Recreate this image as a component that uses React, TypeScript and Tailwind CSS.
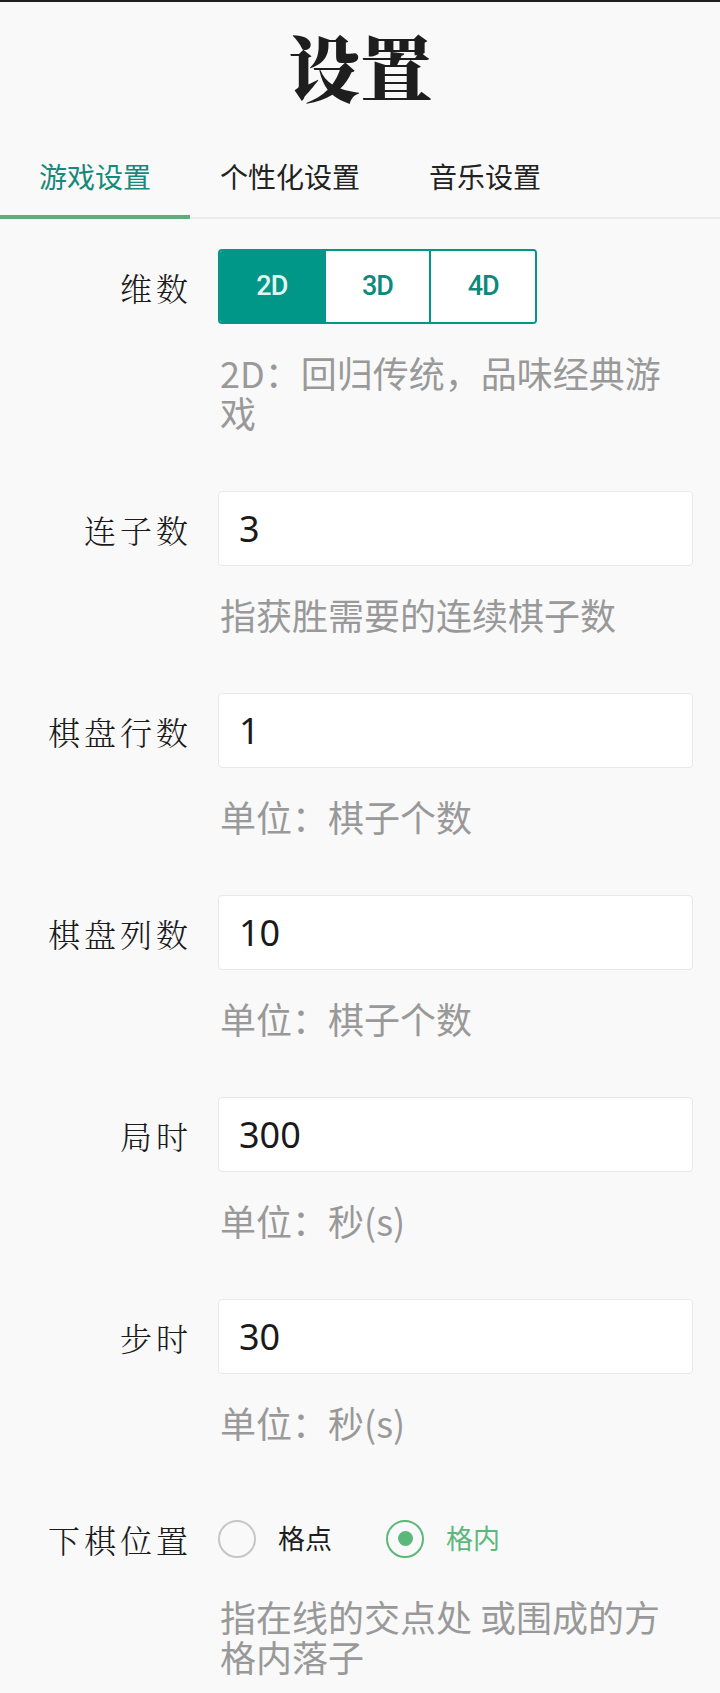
import { useState } from "react";

const CJK = '"Noto Sans CJK SC", "Noto Sans", sans-serif';
const LABEL_FONT = '"Noto Serif CJK SC", "Noto Serif SC", serif';

const TABS = [
  { name: "游戏设置", width: "w-[190px]" },
  { name: "个性化设置", width: "w-[200px]" },
  { name: "音乐设置", width: "w-[190px]" },
];

const FIELDS = [
  { label: "连子数", value: "3", desc: "指获胜需要的连续棋子数" },
  { label: "棋盘行数", value: "1", desc: "单位：棋子个数" },
  { label: "棋盘列数", value: "10", desc: "单位：棋子个数" },
  { label: "局时", value: "300", desc: "单位：秒(s)" },
  { label: "步时", value: "30", desc: "单位：秒(s)" },
];

function Label({ text }: { text: string }) {
  return (
    <div
      className="w-[218px] shrink-0 pr-[26px] text-right text-[32px] font-light tracking-[4px] text-[#1b1b1b]"
      style={{ fontFamily: LABEL_FONT }}
    >
      {text}
    </div>
  );
}

function Desc({ text, top = "mt-[28px]" }: { text: string; top?: string }) {
  return (
    <div className={`${top} ml-[220px] w-[468px] text-[36px] leading-[40px] text-[#999999]`}>
      {text}
    </div>
  );
}

export default function App() {
  const [tab, setTab] = useState(0);
  const [dim, setDim] = useState("2D");
  const [place, setPlace] = useState("inner");

  return (
    <div
      className="min-h-screen border-t-2 border-[#1f1f1f] bg-[#f9f9f9]"
      style={{ fontFamily: CJK }}
    >
      <h1
        className="pt-[27px] text-center text-[72px] leading-[72px] font-black text-[#1e1e1e]"
        style={{ fontFamily: '"Noto Serif CJK SC", "Noto Sans CJK SC", serif' }}
      >
        设置
      </h1>

      <div className="mt-[32px] flex border-b-2 border-[#ebebeb]">
        {TABS.map((t, i) => (
          <button
            key={t.name}
            onClick={() => setTab(i)}
            className={`${t.width} -mb-[2px] flex h-[86px] items-center justify-center border-b-4 pt-1 text-[28px] ${
              tab === i
                ? "border-[#63ab7c] text-[#17897b]"
                : "border-transparent text-[#222222]"
            }`}
          >
            {t.name}
          </button>
        ))}
      </div>

      <div className="pt-[30px] pb-[20px]">
        {/* 维数 */}
        <div className="flex items-center">
          <Label text="维数" />
          <div className="flex h-[75px] w-[319px] overflow-hidden rounded-[4px] border-2 border-[#009688]">
            {["2D", "3D", "4D"].map((d, i) => (
              <button
                key={d}
                onClick={() => setDim(d)}
                className={`flex flex-1 items-center justify-center text-[27px] font-medium tracking-[-1px] ${
                  i > 0 ? "border-l-2 border-[#009688]" : ""
                } ${dim === d ? "bg-[#009688] text-[#e3f5f0]" : "bg-white text-[#0b8a7c]"}`}
                style={{ fontFamily: "Roboto, sans-serif" }}
              >
                {d}
              </button>
            ))}
          </div>
        </div>
        <Desc text="2D：回归传统，品味经典游戏" />

        {FIELDS.map((f) => (
          <div key={f.label} className="mt-[59px]">
            <div className="flex items-center">
              <Label text={f.label} />
              <input
                defaultValue={f.value}
                className="h-[75px] w-[475px] rounded-[4px] border border-[#e8e8e8] bg-white pl-[20px] text-[36px] text-[#1a1a1a] outline-none"
                style={{ fontFamily: '"Noto Sans", sans-serif' }}
              />
            </div>
            <Desc text={f.desc} />
          </div>
        ))}

        {/* 下棋位置 */}
        <div className="mt-[59px]">
          <div className="flex h-[75px] items-center">
            <Label text="下棋位置" />
            <div className="flex items-center gap-[54px]">
              {[
                { key: "point", name: "格点" },
                { key: "inner", name: "格内" },
              ].map((r) => {
                const on = place === r.key;
                return (
                  <button
                    key={r.key}
                    onClick={() => setPlace(r.key)}
                    className="flex items-center gap-[22px]"
                  >
                    <span
                      className={`flex h-[38px] w-[38px] items-center justify-center rounded-full border-2 ${
                        on ? "border-[#5cb87a]" : "border-[#c6c6c6]"
                      }`}
                    >
                      {on && <span className="h-[15px] w-[15px] rounded-full bg-[#5cb87a]" />}
                    </span>
                    <span className={`text-[27px] ${on ? "text-[#5cb87a]" : "text-[#1e1e1e]"}`}>
                      {r.name}
                    </span>
                  </button>
                );
              })}
            </div>
          </div>
          <Desc text="指在线的交点处 或围成的方格内落子" top="mt-[20px]" />
        </div>
      </div>
    </div>
  );
}
